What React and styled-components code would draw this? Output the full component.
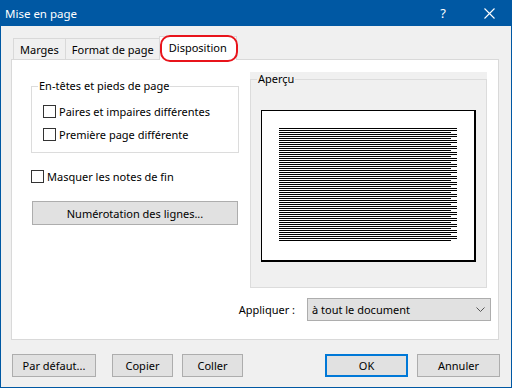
import React from 'react';
import styled, { createGlobalStyle } from 'styled-components';

const Global = createGlobalStyle`
  html, body { margin: 0; padding: 0; background: #ffffff; }
  body {
    font-family: "Noto Sans", "Open Sans", sans-serif;
    font-size: 11px;
    color: #000000;
  }
  * { box-sizing: border-box; }
`;

const Window = styled.div`
  width: 512px;
  height: 388px;
  border: 1px solid #0058a3;
  border-top: none;
  background: #f0f0f0;
  display: flex;
  flex-direction: column;
`;

const TitleBar = styled.div`
  height: 26px;
  margin: 0 -1px;
  background: #0058a3;
  color: #ffffff;
  display: flex;
  align-items: center;
  padding-left: 5px;
  font-size: 11.5px;
`;

const Title = styled.div`
  flex: 1;
`;

const TitleButton = styled.div`
  width: ${(p) => p.$w}px;
  height: 26px;
  display: flex;
  align-items: center;
  justify-content: center;
  font-size: 13px;
`;

const Body = styled.div`
  flex: 1;
  display: flex;
  flex-direction: column;
  padding: 10px 11px 10px 10px;
`;

const TabStrip = styled.div`
  display: flex;
  align-items: flex-end;
  height: 24px;
  margin-bottom: -1px;
  padding-left: 2px;
  position: relative;
  z-index: 1;
`;

const Tab = styled.div`
  position: relative;
  height: ${(p) => (p.$active ? 24 : 22)}px;
  padding: 0 ${(p) => (p.$active ? 9 : 6)}px;
  margin-left: ${(p) => (p.$active ? -2 : p.$first ? 0 : -1)}px;
  background: ${(p) => (p.$active ? '#ffffff' : '#f0f0f0')};
  border: 1px solid #d9d9d9;
  border-bottom: ${(p) => (p.$active ? 'none' : '1px solid #d9d9d9')};
  display: flex;
  align-items: center;
  padding-bottom: ${(p) => (p.$active ? 3 : 0)}px;
  z-index: ${(p) => (p.$active ? 2 : 0)};
  white-space: nowrap;
`;

const Highlight = styled.div`
  position: absolute;
  left: 0;
  right: -2px;
  top: -2px;
  bottom: -2px;
  border: 2px solid #e8141b;
  border-radius: 10px;
  pointer-events: none;
`;

const TabPanel = styled.div`
  width: 488px;
  height: 281px;
  background: #ffffff;
  border: 1px solid #d9d9d9;
  padding: 12px 11px 0 19px;
  display: flex;
  flex-direction: column;
`;

const Columns = styled.div`
  display: flex;
  gap: 11px;
`;

const LeftColumn = styled.div`
  width: 208px;
  padding-top: 7px;
  display: flex;
  flex-direction: column;
`;

const GroupBox = styled.fieldset`
  margin: 0;
  min-width: 0;
  border: 1px solid #dcdcdc;
  padding: 7px 0 6px 0;
`;

const CheckList = styled.div`
  padding-left: 11px;
`;

const Legend = styled.legend`
  margin-left: 6px;
  padding: 0 1px;
  line-height: 14px;
  font-size: 11px;
`;

const CheckRow = styled.label`
  height: 23px;
  display: flex;
  align-items: center;
  gap: 3px;
  margin-top: ${(p) => p.$mt || 0}px;
`;

const CheckBox = styled.span`
  width: 13px;
  height: 13px;
  border: 1px solid #333333;
  background: #ffffff;
  flex: none;
`;

const Button = styled.div`
  width: ${(p) => p.$w}px;
  height: ${(p) => p.$h || 23}px;
  margin-left: ${(p) => p.$ml || 0}px;
  margin-top: ${(p) => p.$mt || 0}px;
  background: #e1e1e1;
  border: ${(p) => (p.$default ? '2px solid #0078d7' : '1px solid #adadad')};
  display: flex;
  align-items: center;
  justify-content: center;
  white-space: nowrap;
  flex: none;
`;

const PreviewWrap = styled.div`
  width: 237px;
  height: 216px;
  background: #f0f0f0;
  display: flex;
`;

const PreviewGroup = styled.fieldset`
  margin: 0;
  min-width: 0;
  flex: 1;
  border: 1px solid #dcdcdc;
  padding: 0;
  display: flex;
  align-items: center;
  justify-content: center;
`;

const Page = styled.div`
  width: 215px;
  height: 152px;
  background: #ffffff;
  border-style: solid;
  border-color: #000000;
  border-width: 1px 2px 2px 1px;
  margin-top: -1px;
`;

const ApplyRow = styled.div`
  display: flex;
  justify-content: flex-end;
  align-items: center;
  gap: 12px;
  margin-top: 10px;
  margin-right: -4px;
`;

const Select = styled.div`
  width: 184px;
  height: 23px;
  background: #e1e1e1;
  border: 1px solid #adadad;
  display: flex;
  align-items: center;
  justify-content: space-between;
  padding: 0 5px 0 4px;
`;

const Footer = styled.div`
  display: flex;
  align-items: center;
  margin-top: 14px;
  padding-left: 1px;
`;

const Spacer = styled.div`
  flex: 1;
`;

const lines = Array.from({ length: 57 }, (_, i) => i);

function PreviewLines() {
  return (
    <svg width="212" height="149" style={{ display: 'block' }}>
      {lines.map((i) => (
        <rect
          key={i}
          x="17"
          y={17 + i * 2}
          width={i % 3 === 2 ? 172 : 178}
          height="1"
          fill="#000"
        />
      ))}
    </svg>
  );
}

export default function App() {
  return (
    <>
      <Global />
      <Window>
        <TitleBar>
          <Title>Mise en page</Title>
          <TitleButton $w={46}>?</TitleButton>
          <TitleButton $w={46}>
            <svg width="11" height="11" viewBox="0 0 11 11">
              <path d="M0.5 0.5 L10.5 10.5 M10.5 0.5 L0.5 10.5" stroke="#fff" strokeWidth="1.1" />
            </svg>
          </TitleButton>
        </TitleBar>
        <Body>
          <TabStrip>
            <Tab $first>Marges</Tab>
            <Tab>Format de page</Tab>
            <Tab $active>
              Disposition
              <Highlight />
            </Tab>
          </TabStrip>
          <TabPanel>
            <Columns>
              <LeftColumn>
                <GroupBox>
                  <Legend>En-têtes et pieds de page</Legend>
                  <CheckList>
                    <CheckRow>
                      <CheckBox />
                      Paires et impaires différentes
                    </CheckRow>
                    <CheckRow>
                      <CheckBox />
                      Première page différente
                    </CheckRow>
                  </CheckList>
                </GroupBox>
                <CheckRow $mt={12}>
                  <CheckBox />
                  Masquer les notes de fin
                </CheckRow>
                <Button $w={206} $h={24} $ml={1} $mt={13}>
                  Numérotation des lignes...
                </Button>
              </LeftColumn>
              <PreviewWrap>
                <PreviewGroup>
                  <Legend>Aperçu</Legend>
                  <Page>
                    <PreviewLines />
                  </Page>
                </PreviewGroup>
              </PreviewWrap>
            </Columns>
            <ApplyRow>
              <span>Appliquer :</span>
              <Select>
                <span>à tout le document</span>
                <svg width="9" height="5" viewBox="0 0 9 5">
                  <path d="M0.5 0.5 L4.5 4.5 L8.5 0.5" stroke="#555" fill="none" strokeWidth="1" />
                </svg>
              </Select>
            </ApplyRow>
          </TabPanel>
          <Footer>
            <Button $w={84}>Par défaut...</Button>
            <Button $w={61} $ml={16}>Copier</Button>
            <Button $w={61} $ml={9}>Coller</Button>
            <Spacer />
            <Button $w={83} $default>OK</Button>
            <Button $w={83} $ml={9}>Annuler</Button>
          </Footer>
        </Body>
      </Window>
    </>
  );
}
